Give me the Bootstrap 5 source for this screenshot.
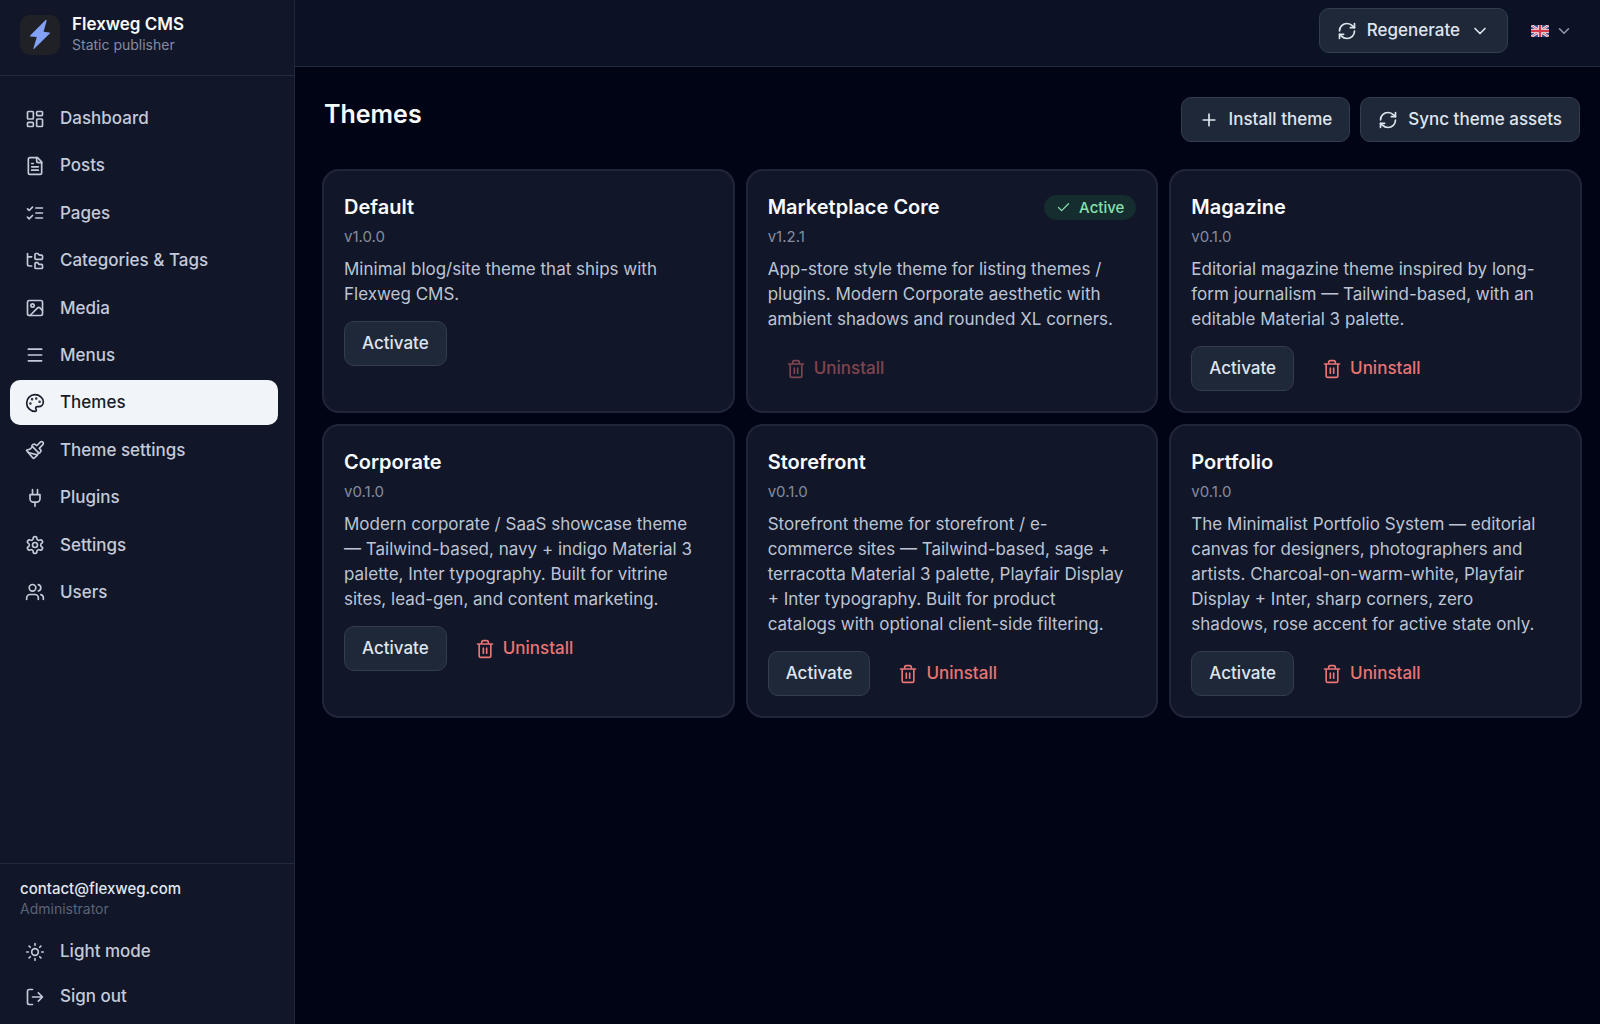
<!DOCTYPE html>
<html lang="en" data-bs-theme="dark">
<head>
<meta charset="utf-8">
<meta name="viewport" content="width=device-width, initial-scale=1">
<title>Themes · Flexweg CMS</title>
<link href="https://cdn.jsdelivr.net/npm/bootstrap@5.3.0/dist/css/bootstrap.min.css" rel="stylesheet">
<style>
  body { background: #010414; color: #e2e8f0; font-family: Inter, sans-serif; font-size: 17px; line-height: 25px; }
  .ico { width: 20px; height: 20px; flex: none; fill: none; stroke: currentColor; stroke-width: 2; stroke-linecap: round; stroke-linejoin: round; }
  .sidebar { width: 295px; background: #111628; border-right: 1px solid #22283a; }
  .brand-bar { padding: 15px 20px 20px; gap: 12px; border-bottom: 1px solid #232a3a; }
  .brand-logo { width: 40px; height: 40px; border-radius: 10px; background: #1f2126; }
  .brand-name { line-height: 22px; color: #f8fafc; margin-top: -2px; }
  .muted-text { font-size: 14px; line-height: 20px; color: #858c9f; }
  .side-nav { padding: 20px 16px 20px 10px; }
  .side-nav .nav { min-height: 519px; }
  .side-link { display: flex; width: 100%; align-items: center; gap: 15px; padding: 10px 15px; border: 0; border-radius: 10px; background: none; color: #c4cad8; font-weight: 500; text-align: left; text-decoration: none; }
  .side-link:hover { color: #fff; }
  .side-link.active { background: #f1f5f9; color: #171b2b; }
  .side-foot { padding: 15px 16px 5px 10px; border-top: 1px solid #232a3a; }
  .side-foot .account { padding: 0 10px 10px; }
  .account-mail { font-size: 15px; line-height: 20px; color: #e2e8f0; }
  .account-role { font-size: 14px; line-height: 20px; color: #5b6376; }
  .topbar { padding: 8px 14px 13px; gap: 10px; background: #0c1225; border-bottom: 1px solid #232a3a; }
  .btn-panel, .btn-plain { --bs-btn-font-size: 17px; --bs-btn-line-height: 25px; --bs-btn-font-weight: 500; --bs-btn-border-radius: 10px; --bs-btn-padding-y: 9px; --bs-btn-padding-x: 17px; --bs-btn-disabled-border-color: transparent; display: inline-flex; align-items: center; }
  .btn-panel { --bs-btn-color: #dfe5ee; --bs-btn-bg: #1f2838; --bs-btn-border-color: #333d4e; --bs-btn-hover-color: #fff; --bs-btn-hover-bg: #2a3546; --bs-btn-hover-border-color: #3b475a; gap: 10px; }
  .btn-plain { --bs-btn-color: #c4cad8; --bs-btn-hover-color: #fff; gap: 8px; }
  .btn-danger-plain { --bs-btn-color: #e97474; --bs-btn-hover-color: #fca5a5; --bs-btn-disabled-color: #e97474; --bs-btn-disabled-opacity: .5; }
  .lang-btn { --bs-btn-padding-x: 12px; color: #9299ab; gap: 6px; }
  .flag { width: 18px; height: 12px; }
  .ico-sm { width: 18px; height: 18px; }
  .page-main { padding: 30px 20px 30px 29px; }
  .page-title { font-size: 25px; line-height: 35px; font-weight: 600; color: #f8fafc; }
  .action-row { gap: 10px; }
  .theme-grid { display: grid; grid-template-columns: repeat(3, minmax(0, 1fr)); gap: 15px; margin-top: 29px; }
  .theme-card { padding: 21px 20px 20px; border-radius: 15px; background: #111628; box-shadow: 0 0 0 2px #20263a; }
  .theme-name { font-size: 20px; line-height: 30px; font-weight: 600; color: #f8fafc; }
  .theme-version { font-size: 15px; line-height: 20px; color: #858c9f; margin: 5px 0 10px; }
  .theme-text { color: #bdc4d3; margin-bottom: 14px; padding-right: 8px; }
  .active-pill { gap: 8px; padding: 0 12px; border-radius: 13px; background: #152d2f; color: #86e0ac; font-size: 15px; font-weight: 500; }
  .active-pill .ico { width: 15px; height: 15px; }
  @media (max-width: 1100px) { .theme-grid { grid-template-columns: minmax(0, 1fr); } }
</style>
<script src="https://cdn.jsdelivr.net/npm/bootstrap@5.3.0/dist/js/bootstrap.bundle.min.js"></script>
</head>
<body>
<svg class="d-none" aria-hidden="true">
  <symbol id="i-dashboard" viewBox="0 0 24 24"><rect width="7" height="9" x="3" y="3" rx="1"/><rect width="7" height="5" x="14" y="3" rx="1"/><rect width="7" height="9" x="14" y="12" rx="1"/><rect width="7" height="5" x="3" y="16" rx="1"/></symbol>
  <symbol id="i-file" viewBox="0 0 24 24"><path d="M15 2H6a2 2 0 0 0-2 2v16a2 2 0 0 0 2 2h12a2 2 0 0 0 2-2V7Z"/><path d="M14 2v4a2 2 0 0 0 2 2h4M10 9H8M16 13H8M16 17H8"/></symbol>
  <symbol id="i-list" viewBox="0 0 24 24"><path d="m3 17 2 2 4-4M3 7l2 2 4-4M13 6h8M13 12h8M13 18h8"/></symbol>
  <symbol id="i-tree" viewBox="0 0 24 24"><path d="M20 10a1 1 0 0 0 1-1V6a1 1 0 0 0-1-1h-2.5a1 1 0 0 1-.8-.4l-.9-1.2A1 1 0 0 0 15 3h-2a1 1 0 0 0-1 1v5a1 1 0 0 0 1 1Z"/><path d="M20 21a1 1 0 0 0 1-1v-3a1 1 0 0 0-1-1h-2.9a1 1 0 0 1-.88-.55l-.42-.85a1 1 0 0 0-.92-.6H13a1 1 0 0 0-1 1v5a1 1 0 0 0 1 1Z"/><path d="M3 5a2 2 0 0 0 2 2h3M3 3v13a2 2 0 0 0 2 2h3"/></symbol>
  <symbol id="i-image" viewBox="0 0 24 24"><rect width="18" height="18" x="3" y="3" rx="2"/><circle cx="9" cy="9" r="2"/><path d="m21 15-3.086-3.086a2 2 0 0 0-2.828 0L6 21"/></symbol>
  <symbol id="i-menu" viewBox="0 0 24 24"><path d="M4 5h16M4 12h16M4 19h16"/></symbol>
  <symbol id="i-palette" viewBox="0 0 24 24"><circle cx="13.5" cy="6.5" r=".5" fill="currentColor"/><circle cx="17.5" cy="10.5" r=".5" fill="currentColor"/><circle cx="8.5" cy="7.5" r=".5" fill="currentColor"/><circle cx="6.5" cy="12.5" r=".5" fill="currentColor"/><path d="M12 2C6.5 2 2 6.5 2 12s4.5 10 10 10c.926 0 1.648-.746 1.648-1.688 0-.437-.18-.835-.437-1.125-.29-.289-.438-.652-.438-1.125a1.64 1.64 0 0 1 1.668-1.668h1.996c3.051 0 5.555-2.503 5.555-5.554C21.965 6.012 17.461 2 12 2z"/></symbol>
  <symbol id="i-brush" viewBox="0 0 24 24"><path d="m14.622 17.897-10.68-2.913"/><path d="M18.376 2.622a1 1 0 1 1 3.002 3.002L17.36 9.643a.5.5 0 0 0 0 .707l.944.944a2.41 2.41 0 0 1 0 3.408l-.944.944a.5.5 0 0 1-.707 0L8.354 7.348a.5.5 0 0 1 0-.707l.944-.944a2.41 2.41 0 0 1 3.408 0l.944.944a.5.5 0 0 0 .707 0z"/><path d="M9 8c-1.804 2.71-3.97 3.46-6.583 3.948a.507.507 0 0 0-.302.819l7.32 8.883a1 1 0 0 0 1.185.204C12.735 20.405 16 16.792 16 15"/></symbol>
  <symbol id="i-plug" viewBox="0 0 24 24"><path d="M12 22v-5M9 8V2M15 8V2M18 8v5a4 4 0 0 1-4 4h-4a4 4 0 0 1-4-4V8Z"/></symbol>
  <symbol id="i-gear" viewBox="0 0 24 24"><path d="M12.22 2h-.44a2 2 0 0 0-2 2v.18a2 2 0 0 1-1 1.73l-.43.25a2 2 0 0 1-2 0l-.15-.08a2 2 0 0 0-2.73.73l-.22.38a2 2 0 0 0 .73 2.73l.15.1a2 2 0 0 1 1 1.72v.51a2 2 0 0 1-1 1.74l-.15.09a2 2 0 0 0-.73 2.73l.22.38a2 2 0 0 0 2.73.73l.15-.08a2 2 0 0 1 2 0l.43.25a2 2 0 0 1 1 1.73V20a2 2 0 0 0 2 2h.44a2 2 0 0 0 2-2v-.18a2 2 0 0 1 1-1.73l.43-.25a2 2 0 0 1 2 0l.15.08a2 2 0 0 0 2.73-.73l.22-.39a2 2 0 0 0-.73-2.73l-.15-.08a2 2 0 0 1-1-1.74v-.5a2 2 0 0 1 1-1.74l.15-.09a2 2 0 0 0 .73-2.73l-.22-.38a2 2 0 0 0-2.73-.73l-.15.08a2 2 0 0 1-2 0l-.43-.25a2 2 0 0 1-1-1.73V4a2 2 0 0 0-2-2z"/><circle cx="12" cy="12" r="3"/></symbol>
  <symbol id="i-users" viewBox="0 0 24 24"><path d="M16 21v-2a4 4 0 0 0-4-4H6a4 4 0 0 0-4 4v2"/><circle cx="9" cy="7" r="4"/><path d="M22 21v-2a4 4 0 0 0-3-3.87M16 3.13a4 4 0 0 1 0 7.75"/></symbol>
  <symbol id="i-sun" viewBox="0 0 24 24"><circle cx="12" cy="12" r="4"/><path d="M12 2v2M12 20v2M4.93 4.93l1.41 1.41M17.66 17.66l1.41 1.41M2 12h2M20 12h2M6.34 17.66l-1.41 1.41M19.07 4.93l-1.41 1.41"/></symbol>
  <symbol id="i-logout" viewBox="0 0 24 24"><path d="M9 21H5a2 2 0 0 1-2-2V5a2 2 0 0 1 2-2h4M16 17l5-5-5-5M21 12H9"/></symbol>
  <symbol id="i-refresh" viewBox="0 0 24 24"><path d="M3 12a9 9 0 0 1 9-9 9.75 9.75 0 0 1 6.74 2.74L21 8"/><path d="M21 3v5h-5"/><path d="M21 12a9 9 0 0 1-9 9 9.75 9.75 0 0 1-6.74-2.74L3 16"/><path d="M8 16H3v5"/></symbol>
  <symbol id="i-chevron" viewBox="0 0 24 24"><path d="m6 9 6 6 6-6"/></symbol>
  <symbol id="i-plus" viewBox="0 0 24 24"><path d="M5 12h14M12 5v14"/></symbol>
  <symbol id="i-check" viewBox="0 0 24 24"><path d="M20 6 9 17l-5-5"/></symbol>
  <symbol id="i-trash" viewBox="0 0 24 24"><path d="M3 6h18M19 6v14a2 2 0 0 1-2 2H7a2 2 0 0 1-2-2V6M8 6V4a2 2 0 0 1 2-2h4a2 2 0 0 1 2 2v2M10 11v6M14 11v6"/></symbol>
</svg>

<div class="d-flex min-vh-100">
  <aside class="sidebar d-flex flex-column flex-shrink-0">
    <div class="brand-bar d-flex">
      <div class="brand-logo flex-shrink-0">
        <svg width="40" height="40" viewBox="0 0 40 40" aria-hidden="true"><path d="M25.6 5 10.2 20.4q-.8 1 .5 1.1l6.1.6-3.4 11.3q-.2 1.1.8.4L29.7 18.600q.9-1-.4-1.200l-5.700-.700 3-10.900q.1-1.400-1-.800Z" fill="#84a1f8"/></svg>
      </div>
      <div>
        <div class="brand-name fw-semibold">Flexweg CMS</div>
        <div class="muted-text">Static publisher</div>
      </div>
    </div>
    <nav class="side-nav flex-grow-1" aria-label="Main">
      <ul class="nav flex-column flex-nowrap justify-content-between">
        <li><a class="side-link" href="#"><svg class="ico"><use href="#i-dashboard"/></svg>Dashboard</a></li>
        <li><a class="side-link" href="#"><svg class="ico"><use href="#i-file"/></svg>Posts</a></li>
        <li><a class="side-link" href="#"><svg class="ico"><use href="#i-list"/></svg>Pages</a></li>
        <li><a class="side-link" href="#"><svg class="ico"><use href="#i-tree"/></svg>Categories &amp; Tags</a></li>
        <li><a class="side-link" href="#"><svg class="ico"><use href="#i-image"/></svg>Media</a></li>
        <li><a class="side-link" href="#"><svg class="ico"><use href="#i-menu"/></svg>Menus</a></li>
        <li><a class="side-link active" href="#" aria-current="page"><svg class="ico"><use href="#i-palette"/></svg>Themes</a></li>
        <li><a class="side-link" href="#"><svg class="ico"><use href="#i-brush"/></svg>Theme settings</a></li>
        <li><a class="side-link" href="#"><svg class="ico"><use href="#i-plug"/></svg>Plugins</a></li>
        <li><a class="side-link" href="#"><svg class="ico"><use href="#i-gear"/></svg>Settings</a></li>
        <li><a class="side-link" href="#"><svg class="ico"><use href="#i-users"/></svg>Users</a></li>
      </ul>
    </nav>
    <div class="side-foot">
      <div class="account">
        <div class="account-mail fw-medium">contact@flexweg.com</div>
        <div class="account-role">Administrator</div>
      </div>
      <button type="button" class="side-link"><svg class="ico"><use href="#i-sun"/></svg>Light mode</button>
      <button type="button" class="side-link"><svg class="ico"><use href="#i-logout"/></svg>Sign out</button>
    </div>
  </aside>

  <div class="flex-grow-1">
    <header class="topbar d-flex justify-content-end align-items-center">
      <button type="button" class="btn btn-panel"><svg class="ico"><use href="#i-refresh"/></svg>Regenerate<svg class="ico"><use href="#i-chevron"/></svg></button>
      <button type="button" class="btn btn-plain lang-btn" aria-label="Language: English">
        <svg class="flag" viewBox="0 0 60 40" aria-hidden="true"><rect width="60" height="40" rx="3" fill="#33488f"/><path d="M0 0 60 40M60 0 0 40" stroke="#eef0f5" stroke-width="9"/><path d="M0 0 60 40M60 0 0 40" stroke="#d63a4c" stroke-width="3"/><path d="M30 0V40M0 20H60" stroke="#eef0f5" stroke-width="14"/><path d="M30 0V40M0 20H60" stroke="#d63a4c" stroke-width="8"/></svg>
        <svg class="ico ico-sm"><use href="#i-chevron"/></svg>
      </button>
    </header>

    <main class="page-main">
      <div class="d-flex justify-content-between align-items-start">
        <h1 class="page-title mb-0">Themes</h1>
        <div class="action-row d-flex">
          <button type="button" class="btn btn-panel"><svg class="ico"><use href="#i-plus"/></svg>Install theme</button>
          <button type="button" class="btn btn-panel"><svg class="ico"><use href="#i-refresh"/></svg>Sync theme assets</button>
        </div>
      </div>

      <div class="theme-grid">
        <article class="theme-card">
          <h2 class="theme-name mb-0">Default</h2>
          <p class="theme-version">v1.0.0</p>
          <p class="theme-text">Minimal blog/site theme that ships with Flexweg CMS.</p>
          <div class="action-row d-flex">
            <button type="button" class="btn btn-panel">Activate</button>
          </div>
        </article>
        <article class="theme-card">
          <div class="d-flex justify-content-between align-items-center">
            <h2 class="theme-name mb-0">Marketplace Core</h2>
            <span class="active-pill d-inline-flex align-items-center"><svg class="ico"><use href="#i-check"/></svg>Active</span>
          </div>
          <p class="theme-version">v1.2.1</p>
          <p class="theme-text">App-store style theme for listing themes / plugins. Modern Corporate aesthetic with ambient shadows and rounded XL corners.</p>
          <div class="action-row d-flex">
            <button type="button" class="btn btn-plain btn-danger-plain" disabled><svg class="ico"><use href="#i-trash"/></svg>Uninstall</button>
          </div>
        </article>
        <article class="theme-card">
          <h2 class="theme-name mb-0">Magazine</h2>
          <p class="theme-version">v0.1.0</p>
          <p class="theme-text">Editorial magazine theme inspired by long-form journalism — Tailwind-based, with an editable Material 3 palette.</p>
          <div class="action-row d-flex">
            <button type="button" class="btn btn-panel">Activate</button>
            <button type="button" class="btn btn-plain btn-danger-plain"><svg class="ico"><use href="#i-trash"/></svg>Uninstall</button>
          </div>
        </article>
        <article class="theme-card">
          <h2 class="theme-name mb-0">Corporate</h2>
          <p class="theme-version">v0.1.0</p>
          <p class="theme-text">Modern corporate / SaaS showcase theme — Tailwind-based, navy + indigo Material 3 palette, Inter typography. Built for vitrine sites, lead-gen, and content marketing.</p>
          <div class="action-row d-flex">
            <button type="button" class="btn btn-panel">Activate</button>
            <button type="button" class="btn btn-plain btn-danger-plain"><svg class="ico"><use href="#i-trash"/></svg>Uninstall</button>
          </div>
        </article>
        <article class="theme-card">
          <h2 class="theme-name mb-0">Storefront</h2>
          <p class="theme-version">v0.1.0</p>
          <p class="theme-text">Storefront theme for storefront / e-commerce sites — Tailwind-based, sage + terracotta Material 3 palette, Playfair Display + Inter typography. Built for product catalogs with optional client-side filtering.</p>
          <div class="action-row d-flex">
            <button type="button" class="btn btn-panel">Activate</button>
            <button type="button" class="btn btn-plain btn-danger-plain"><svg class="ico"><use href="#i-trash"/></svg>Uninstall</button>
          </div>
        </article>
        <article class="theme-card">
          <h2 class="theme-name mb-0">Portfolio</h2>
          <p class="theme-version">v0.1.0</p>
          <p class="theme-text">The Minimalist Portfolio System — editorial canvas for designers, photographers and artists. Charcoal-on-warm-white, Playfair Display + Inter, sharp corners, zero shadows, rose accent for active state only.</p>
          <div class="action-row d-flex">
            <button type="button" class="btn btn-panel">Activate</button>
            <button type="button" class="btn btn-plain btn-danger-plain"><svg class="ico"><use href="#i-trash"/></svg>Uninstall</button>
          </div>
        </article>
      </div>
    </main>
  </div>
</div>
</body>
</html>
